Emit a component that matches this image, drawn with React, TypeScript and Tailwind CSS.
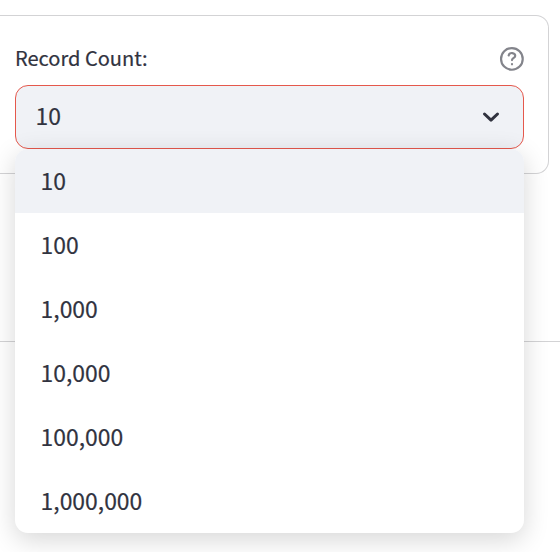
const options = ['10', '100', '1,000', '10,000', '100,000', '1,000,000'];

function HelpIcon() {
  return (
    <svg width="26" height="26" viewBox="0 0 24 24" fill="none" stroke="#83848b" strokeWidth="2" strokeLinecap="round" strokeLinejoin="round" aria-hidden="true">
      <circle cx="11.9" cy="11.9" r="10" />
      <path d="M8.9 8.7a3.05 2.65 0 0 1 6.05.6c0 1.6-2.9 1.9-2.95 3.7" />
      <path d="M12 16.6v.3" />
    </svg>
  );
}

export default function App() {
  return (
    <main className="h-[552px] w-[560px] overflow-hidden bg-white pt-[15px] font-['Noto_Sans_CJK_SC',sans-serif] text-[#31333f] [-webkit-text-stroke:0.2px]">
      <div className="h-[327px] border-b border-[#d3d3d5]">
        <section className="h-[159px] w-[549px] rounded-r-[13px] border border-l-0 border-[#d3d3d5] pt-[29px] pr-6 pl-[15px]">
          <div className="flex h-[40px] items-start justify-between">
            <label className="text-[20.05px] leading-[26px]">Record Count:</label>
            <span className="mt-[1px] -mr-[1px]"><HelpIcon /></span>
          </div>
          <div className="relative w-[509px]">
            <button className="flex h-16 w-full items-center justify-between rounded-[13px] border border-[#e5584c] bg-[#f0f2f6] pr-5 pl-[19.5px] text-left text-[22.9px] leading-[32px]">
              <span className="pb-[4px]">10</span>
              <svg width="24" height="24" viewBox="0 0 24 24" fill="none" stroke="#31333f" strokeWidth="3" strokeLinecap="round" strokeLinejoin="round" aria-hidden="true">
                <path d="m5.5 9 6.5 6.2L18.5 9" />
              </svg>
            </button>
            <ul className="absolute top-16 left-0 w-full overflow-hidden rounded-[13px] bg-white text-[22.9px] leading-[62px] shadow-[0_6.4px_25.6px_rgba(0,0,0,0.16)]">
              {options.map((option, index) => (
                <li key={option} className={index === 0 ? 'h-16 bg-[#f0f2f6] pl-[25.6px]' : 'h-16 pl-[25.6px]'}>{option}</li>
              ))}
            </ul>
          </div>
        </section>
      </div>
    </main>
  );
}
